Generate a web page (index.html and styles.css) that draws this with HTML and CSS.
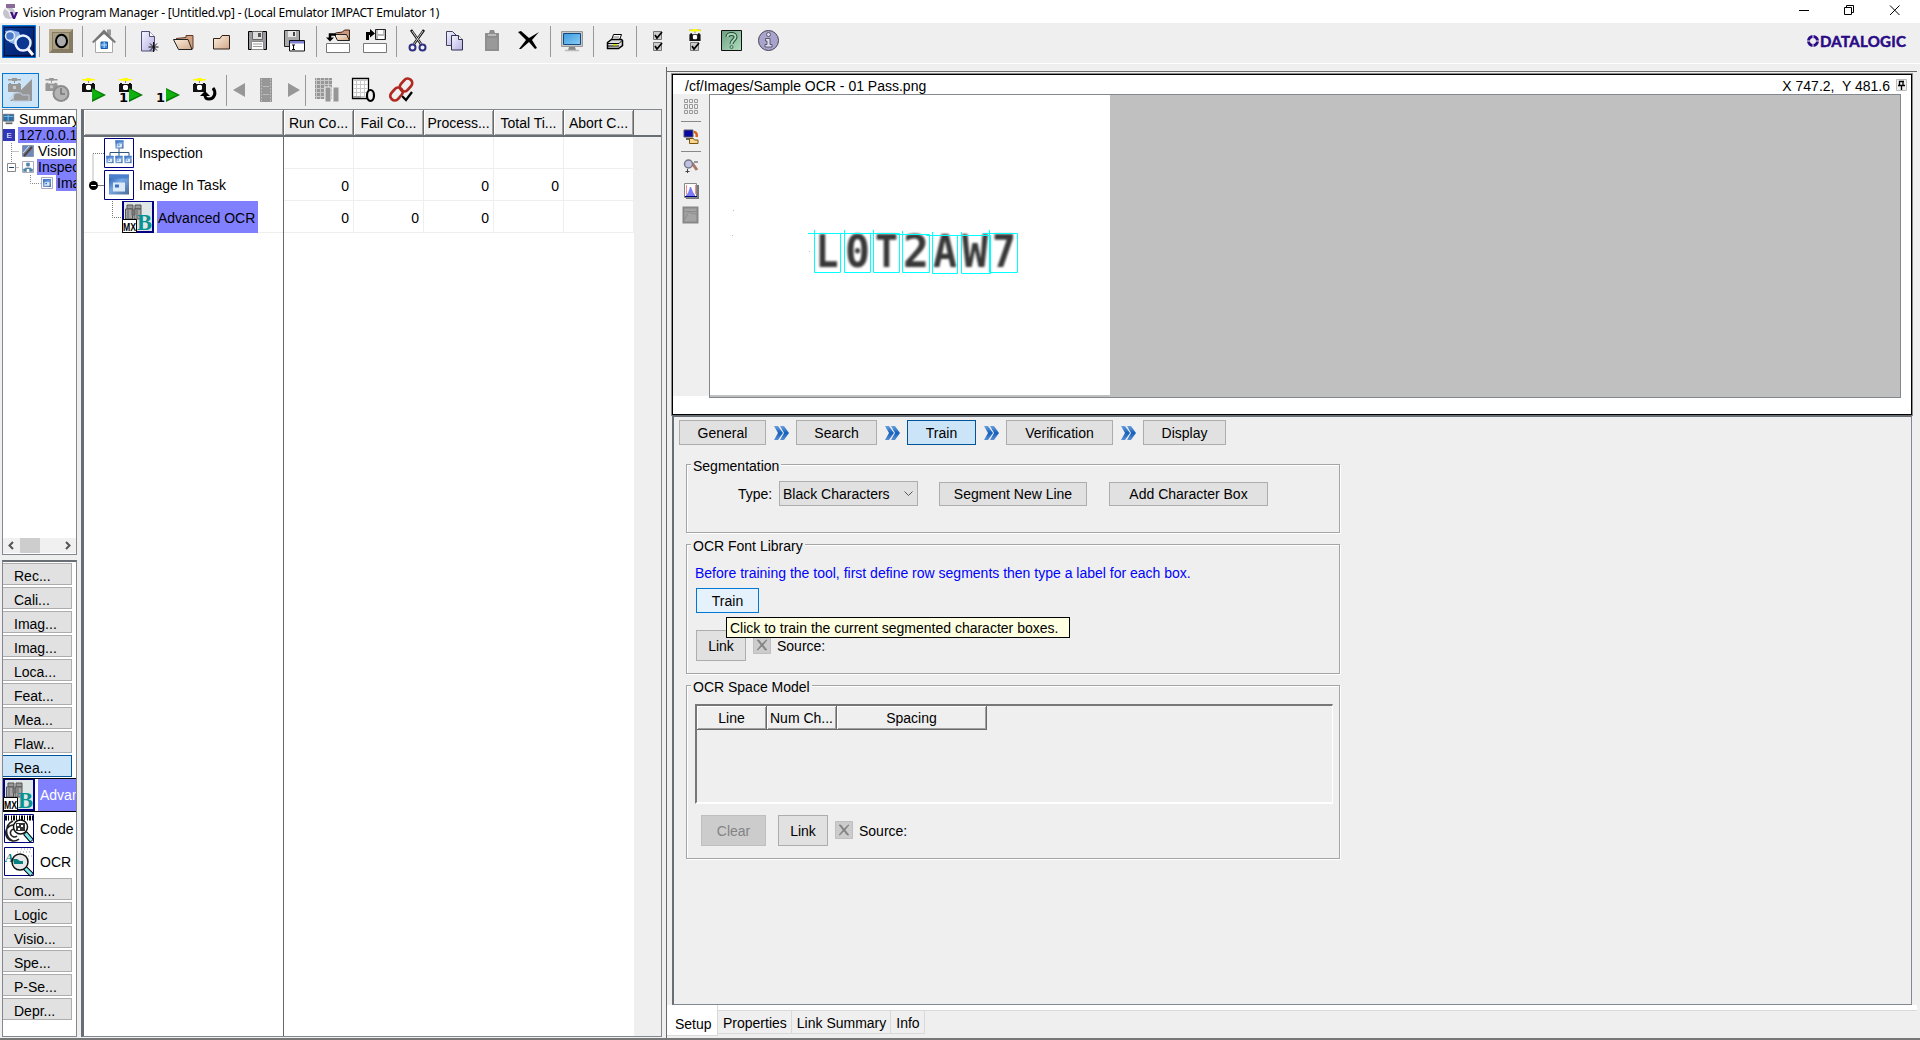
FILE: index.html
```html
<!DOCTYPE html>
<html lang="en">
<head>
<meta charset="utf-8">
<title>Vision Program Manager</title>
<link rel="stylesheet" href="styles.css">
</head>
<body>
<svg class="defs" width="0" height="0">
  <defs>
    <linearGradient id="lilac" x1="0" y1="0" x2="1" y2="1"><stop offset="0" stop-color="#f4f4ff"/><stop offset="1" stop-color="#b4b0e0"/></linearGradient>
    <linearGradient id="tan" x1="0" y1="0" x2="1" y2="1"><stop offset="0" stop-color="#fff0e0"/><stop offset="1" stop-color="#d0a888"/></linearGradient>
    <linearGradient id="navy" x1="0" y1="0" x2="1" y2="1"><stop offset="0" stop-color="#0b3c9c"/><stop offset="1" stop-color="#001a66"/></linearGradient>
    <linearGradient id="sky" x1="0" y1="0" x2="1" y2="1"><stop offset="0" stop-color="#3a9be0"/><stop offset="1" stop-color="#8ccbf5"/></linearGradient>
    <linearGradient id="win" x1="0" y1="0" x2="1" y2="1"><stop offset="0" stop-color="#1c50a8"/><stop offset=".45" stop-color="#78a8e4"/><stop offset="1" stop-color="#4a6a98"/></linearGradient>
    <linearGradient id="greens" x1="0" y1="0" x2="1" y2="1"><stop offset="0" stop-color="#6f9c80"/><stop offset="1" stop-color="#b0e0c0"/></linearGradient>
    <linearGradient id="chevs" x1="0" y1="0" x2="0" y2="1"><stop offset="0" stop-color="#6da0dc"/><stop offset=".5" stop-color="#1460bc"/><stop offset="1" stop-color="#5a90d4"/></linearGradient>
    <pattern id="filmgrid" width="4" height="4" patternUnits="userSpaceOnUse"><path d="M0 .5h4M.5 0v4" stroke="#c8c8c8"/></pattern>
    <symbol id="cam" viewBox="0 0 13 14"><path d="M0 1.5h13" stroke="#000" stroke-width="1"/><path d="M0 1h13v1.6h-13zM4 0h5v3h-5z" fill="#ff0"/><path d="M6 3h1v2h-1z" fill="#888"/><path d="M1 5h2v1h7v-1h2v1h1v8h-13v-8h1z" fill="#111"/><path d="M5 7h3l1 1v3l-1 1h-3l-1-1v-3z" fill="#fff"/></symbol>
    <symbol id="camgray" viewBox="0 0 13 14"><path d="M0 1h13v1.6h-13zM4 0h5v3h-5zM6 3h1v2h-1zM1 5h2v1h7v-1h2v1h1v8h-13v-8h1z" fill="#979797"/><path d="M5 8h3v3h-3z" fill="#c8c8c8"/></symbol>
    <symbol id="play" viewBox="0 0 15 14"><path d="M1 0l14 7-14 7z" fill="#0a7c0a"/><path d="M1 1l11 6-11 5z" fill="#10b010"/></symbol>
    <symbol id="chevron" viewBox="0 0 15 14"><path d="M0 0h4l5 7-5 7h-4l4-7zM6 0h4l5 7-5 7h-4l4-7z" fill="url(#chevs)"/></symbol>
    <symbol id="window" viewBox="0 0 22 22"><path d="M1 1h20v20h-20z" fill="url(#win)"/><path d="M1 1h20v4h-20z" fill="#4a80cc"/><path d="M5 9h12v9h-12z" fill="#dceaf8"/><path d="M7 11h4v3h-4z" fill="#3870c8"/></symbol>
    <symbol id="mxb" viewBox="0 0 32 32"><path d="M0 0h32v32h-32z" fill="#000080"/><path d="M2 1h28v29h-28z" fill="#dfe7e7"/><path d="M5 4h6v4h-6zM13 4h6v4h-6z" fill="#999" stroke="#555"/><path d="M3.500 8h7v10h-7zM12 8h7v10h-7z" fill="#a4a4a4" stroke="#555"/><path d="M10 9h3v5h-3zM6 9v8M15 9v8" stroke="#666" fill="#777"/><text x="15" y="29" font-family="Liberation Serif" font-weight="700" font-size="24" fill="#0a9292" textLength="15" lengthAdjust="spacingAndGlyphs">B</text><path d="M.5 18.500h14v13h-14z" fill="#fff" stroke="#000"/><text x="1" y="29.500" font-family="Liberation Sans" font-weight="700" font-size="10" textLength="13" lengthAdjust="spacingAndGlyphs">MX</text></symbol>
    <symbol id="check" viewBox="0 0 10 9"><path d="M.5 .5h8v8h-8z" fill="#ccc" stroke="#777"/><path d="M2 4l2 3 5-6" fill="none" stroke="#000" stroke-width="1.700"/></symbol>
    <symbol id="cross" viewBox="0 0 18 18"><path d="M.5 .5h17v17h-17z" fill="#ccc" stroke="#bfbfbf"/><path d="M4 4h2l3 4 4-4h1l-4 5 4 5h-2l-3-4-4 4h-1l4-5z" fill="#838383" stroke="#838383" stroke-width=".6"/></symbol>
  </defs>
</svg>

<header class="titlebar">
  <svg class="app-icon" viewBox="0 0 18 18"><circle cx="7" cy="10" r="6" fill="#c4c4cc"/><path d="M4 1h9v4h-9z" fill="#8a6a98"/><path d="M3 5l4 3 2 6" stroke="#eee" fill="none" stroke-width="2"/><path d="M8 9l3 7h2l3-7h-2.500l-1.500 4-1.500-4z" fill="#401080"/></svg>
  <span class="title">Vision Program Manager - [Untitled.vp] - (Local Emulator IMPACT Emulator 1)</span>
  <svg class="win-controls" viewBox="0 0 108 23"><path d="M4 10.500h10" stroke="#000"/><path d="M49.500 7.500h7v7h-7zM51.500 7.500v-2h7v7h-2" fill="none" stroke="#000"/><path d="M95 5.500l9.500 9.500M104.500 5.500l-9.500 9.500" stroke="#000" fill="none"/></svg>
</header>

<nav class="toolbar">
  <svg class="tool" viewBox="0 23 37 36"><path d="M2.500 25.500h33v32h-33z" fill="url(#navy)" stroke="#0078d7"/><path d="M4.500 27.500h29v28h-29z" fill="none" stroke="#000" stroke-dasharray="1 1"/><path d="M5 31l6-1 8 2 3 8-6 5-7-3z" fill="#8fb4e8"/><circle cx="10" cy="36" r="4.500" fill="#4c78c8" stroke="#dceaff" stroke-width="1.500"/><circle cx="23" cy="43" r="7.500" fill="#0c3790" stroke="#e8f2ff" stroke-width="2.400"/><path d="M28 49l5 6" stroke="#fff" stroke-width="3"/></svg>
  <i class="sep"></i>
  <svg class="tool" viewBox="43 23 37 36"><path d="M49 29h24v24h-24z" fill="#857b62"/><path d="M49 29h24l-3 3h-18v18l-3 3z" fill="#b8ad90"/><path d="M53 33h16v16h-16z" fill="#a89e84"/><ellipse cx="61.500" cy="41" rx="5.500" ry="6.300" fill="#aaa" stroke="#000" stroke-width="2"/></svg>
  <i class="sep"></i>
  <svg class="tool" viewBox="86 23 37 36"><path d="M95.500 41v11.500h17v-11.500l-8.500-8z" fill="#fff" stroke="#aaa"/><path d="M107 29.500h4v6h-4z" fill="#999"/><path d="M92 42l12-12.500 12 12.500-1.500 1-10.500-9-10.500 9z" fill="#777"/><path d="M101 42h6.500v6.500h-6.500z" fill="#3a8be0" stroke="#1a58a8"/><path d="M104.200 42v6M101 45h6" stroke="#bde"/></svg>
  <i class="sep"></i>
  <svg class="tool" viewBox="129 23 37 36"><path d="M141.500 31.500h8l5 5v14.500h-13z" fill="url(#lilac)" stroke="#505078"/><path d="M149.500 31.500v5h5" fill="#fff" stroke="#505078"/><path d="M153.500 42v10M148.500 47h10M150 43.500l7 7M157 43.500l-7 7" stroke="#111" fill="none"/></svg>
  <svg class="tool" viewBox="166 23 37 36"><path d="M176 38.500l10-1v-2h7v13l-2 1" fill="#d0a080" stroke="#603828"/><path d="M173.500 39.500h14.500l4 10h-13.500z" fill="url(#tan)" stroke="#222"/></svg>
  <svg class="tool" viewBox="203 23 37 36"><path d="M213.500 38.500h6.500l2-3h7.500v13.500h-16z" fill="url(#tan)" stroke="#302018"/></svg>
  <svg class="tool" viewBox="240 23 37 36"><path d="M248.500 31.500h18v18h-18z" fill="#9a9aa0" stroke="#000"/><path d="M252.500 31.500h10v8h-10z" fill="#ddd" stroke="#666"/><path d="M258 33h3v4h-3z" fill="#555"/><path d="M251.500 41.500h12v8h-12z" fill="#fff" stroke="#888"/><path d="M253 44h9M253 46.500h9" stroke="#999"/></svg>
  <svg class="tool" viewBox="277 23 37 36"><path d="M284.500 30.500h15v16h-15z" fill="#aaa" stroke="#222"/><path d="M288 31h8v6h-8z" fill="#e8e8e8"/><path d="M293 32h2v4h-2z" fill="#444"/><path d="M289.500 40.500h15v10.500h-15z" fill="#fff" stroke="#111"/><path d="M290 41h14v2.500h-14z" fill="#8080d0"/><path d="M292 45h3M292 49.500h3M293.500 45v4.500" stroke="#000"/></svg>
  <i class="sep"></i>
  <svg class="tool" viewBox="320 23 37 36"><path d="M326.500 43.500h23v9h-23z" fill="#fff" stroke="#777"/><path d="M335.500 33l7-1 2-2h5v10h-3" fill="#c89880" stroke="#402010"/><path d="M334.500 34.500h12l3 6h-12z" fill="url(#tan)" stroke="#222"/><path d="M336 34.500h-6v4" fill="none" stroke="#000" stroke-width="2.500"/><path d="M326 37.500h8l-4 4z"/></svg>
  <svg class="tool" viewBox="357 23 37 36"><path d="M363.500 43.500h23v9h-23z" fill="#fff" stroke="#777"/><path d="M375.500 29.500h10v10h-10z" fill="#bbb" stroke="#222"/><path d="M378 30h5v4h-5zM378 36h6v3h-6z" fill="#fff"/><path d="M367.500 40v-6.500h3" fill="none" stroke="#000" stroke-width="3"/><path d="M370 29l5 4.500-5 4z"/></svg>
  <i class="sep"></i>
  <svg class="tool" viewBox="400 23 37 36"><path d="M411 30l10 14M424 30l-10 14" stroke="#111" stroke-width="2.500"/><path d="M412 31l9 13M423 31l-9 13" stroke="#fff" stroke-width=".8"/><circle cx="412.500" cy="47.500" r="3" fill="#eef" stroke="#303080" stroke-width="2"/><circle cx="422.500" cy="47.500" r="3" fill="#eef" stroke="#303080" stroke-width="2"/></svg>
  <svg class="tool" viewBox="437 23 37 36"><path d="M446.500 31.500h6l4 4v10h-10z" fill="url(#lilac)" stroke="#404060"/><path d="M451.500 35.500h7l4 4v10.500h-11z" fill="url(#lilac)" stroke="#303050"/><path d="M458.500 35.500v4h4" fill="#fff" stroke="#303050"/></svg>
  <svg class="tool" viewBox="474 23 37 36"><path d="M485 33h4l1-3h4l1 3h4v18h-14z" fill="#8e8e8e"/><path d="M488 34h8v2h-8z" fill="#bbb"/><path d="M487 38h10v11h-10z" fill="#999"/></svg>
  <svg class="tool" viewBox="511 23 37 36"><path d="M518 32l3-1 8 7 10-6-7 8 5 8-2 1-6-7-8 7-2 0 7-9z"/></svg>
  <i class="sep"></i>
  <svg class="tool" viewBox="554 23 37 36"><path d="M561.500 31.500h21v15h-21z" fill="#c8c8c8" stroke="#999"/><path d="M563.500 33.500h17v11h-17z" fill="url(#sky)" stroke="#124a80"/><path d="M569 47h6l1 3h-8z" fill="#888"/><path d="M565 50.500h14" stroke="#bbb" stroke-width="1.500"/></svg>
  <i class="sep"></i>
  <svg class="tool" viewBox="597 23 37 36"><path d="M611.500 40l2-5.500h8l-2 5.500" fill="#fff" stroke="#000"/><path d="M613 37h6" stroke="#777"/><path d="M607.500 42.500l4-3h10l1 1v5l-4 3h-11z" fill="#ddd" stroke="#000" stroke-width="1.500"/><path d="M608 43.500h11l3-3M608 46h11" stroke="#000" fill="none"/><path d="M613 44h4v1.500h-4z" fill="#dd0"/></svg>
  <i class="sep"></i>
  <svg class="tool" viewBox="640 23 37 36"><use href="#check" x="653" y="31" width="10" height="9"/><use href="#check" x="653" y="42" width="10" height="9"/></svg>
  <svg class="tool" viewBox="677 23 37 36"><use href="#cam" x="689" y="29" width="12" height="12"/><use href="#check" x="690" y="42" width="10" height="9"/></svg>
  <svg class="tool" viewBox="714 23 37 36"><path d="M721.500 30.500h20v20h-20z" fill="url(#greens)" stroke="#111"/><path d="M727.500 37c0-4 8-4 8 0 0 3-4 3-4 7" fill="none" stroke="#243" stroke-width="4"/><path d="M727.500 37c0-4 8-4 8 0 0 3-4 3-4 7" fill="none" stroke="#a8d8b8" stroke-width="2"/><circle cx="731.500" cy="47" r="1.500" fill="#a8d8b8" stroke="#243" stroke-width=".7"/></svg>
  <svg class="tool" viewBox="751 23 37 36"><circle cx="768.500" cy="40.500" r="10" fill="#a9a4cc" stroke="#445" /><circle cx="768.500" cy="34.500" r="2" fill="#dde" stroke="#445" stroke-width=".8"/><path d="M765.500 38.500h4.500v6h2v2.500h-7v-2.500h2v-3.500h-1.500z" fill="#dde" stroke="#445" stroke-width=".8"/></svg>
  <div class="brand"><svg width="12" height="12" viewBox="0 0 12 12"><circle cx="6" cy="6" r="4.500" fill="none" stroke="#2b0a86" stroke-width="3"/><path d="M6 0v3M6 9v3M0 6h3M9 6h3" stroke="#efefef" stroke-width="1"/></svg><span>DATALOGIC</span></div>
</nav>

<main class="workspace">
  <section class="left">
    <nav class="runbar">
      <svg class="tool on" viewBox="2 73 37 35"><path d="M32 79v22h-22z" fill="#979797"/><use href="#camgray" x="8" y="78" width="13" height="14"/><path d="M9 99l8-7M14 93h7l1 2h7v6h-16z" fill="#979797" stroke="#bcd"/></svg>
      <svg class="tool" viewBox="39 73 37 35"><use href="#camgray" x="45" y="78" width="13" height="13"/><circle cx="61" cy="93.500" r="7.500" fill="#b4b4b4" stroke="#8c8c8c" stroke-width="2"/><path d="M61 88v6h4" fill="none" stroke="#777" stroke-width="1.500"/></svg>
      <svg class="tool" viewBox="76 73 37 35"><use href="#cam" x="82" y="78" width="13" height="14"/><use href="#play" x="91" y="88" width="15" height="14"/></svg>
      <svg class="tool" viewBox="113 73 37 35"><use href="#cam" x="119" y="78" width="13" height="14"/><text class="one" x="119" y="102">1</text><use href="#play" x="128" y="88" width="15" height="14"/></svg>
      <svg class="tool" viewBox="150 73 37 35"><text class="one" x="156" y="102">1</text><use href="#play" x="165" y="88" width="15" height="14"/></svg>
      <svg class="tool" viewBox="187 73 37 35"><use href="#cam" x="193" y="78" width="13" height="14"/><path d="M213 88c4 5 1 11-4 11-3 0-4-1-4-4" fill="none" stroke="#000" stroke-width="3"/><path d="M200 96l5-5 5 5z"/></svg>
      <i class="sep"></i>
      <svg class="tool half" viewBox="230 73 18 35"><path d="M245 83v14l-12-7z" fill="#979797"/></svg>
      <svg class="tool" viewBox="248 73 37 35"><path d="M260 78h12v24h-12z" fill="#979797"/><path d="M261.500 79v23M270.500 79v23" stroke="#c0c0c0" stroke-dasharray="1.500 1.500"/><path d="M263 86.500h6M263 94.500h6" stroke="#bbb"/></svg>
      <svg class="tool half" viewBox="285 73 18 35"><path d="M288 83v14l12-7z" fill="#979797"/></svg>
      <i class="sep"></i>
      <svg class="tool" viewBox="309 73 37 35"><path d="M315 78h17v21h-17z" fill="#979797"/><path d="M315 78h17v21h-17z" fill="url(#filmgrid)"/><path d="M325 87h6v15h-6zM333 87h6v15h-6z" fill="#979797" stroke="#efefef"/></svg>
      <svg class="tool" viewBox="346 73 37 35"><path d="M352.500 78.500h16v20h-16z" fill="#fff" stroke="#000" stroke-width="1.300"/><path d="M353 79h15v19h-15z" fill="url(#filmgrid)"/><path d="M353 96h8v2h-8z" fill="#999"/><ellipse cx="370.500" cy="95.500" rx="3.500" ry="5.500" fill="#efefef" stroke="#000" stroke-width="2.200"/></svg>
      <svg class="tool" viewBox="383 73 37 35"><g fill="none" stroke="#b02820" stroke-width="2.800"><rect x="-7" y="-4.500" width="14" height="9" rx="4.500" transform="translate(406 85) rotate(-48)"/><rect x="-7" y="-4.500" width="14" height="9" rx="4.500" transform="translate(396.500 94) rotate(-48)"/></g><path d="M402 96l4 4 6-8" fill="none" stroke="#efefef" stroke-width="4"/><path d="M402 96l4 4 6-8" fill="none" stroke="#000" stroke-width="2.200"/></svg>
    </nav>
    <div class="columns">
      <aside class="side">
        <div class="devices">
          <div class="node d0"><svg viewBox="0 0 14 12"><path d="M.5 .5h12v8h-12z" fill="#2a6ea8" stroke="#666"/><path d="M1 3h11M6 1v7" stroke="#7cc4f0"/><path d="M3 10h8v2h-8z" fill="#666"/></svg><span>Summary</span></div>
          <div class="node d0"><svg viewBox="0 0 12 12"><path d="M0 0h12v12h-12z" fill="#3038b8"/><text x="3.500" y="9" font-size="8" fill="#fff" font-family="Liberation Sans">E</text></svg><span class="sel">127.0.0.1</span></div>
          <div class="node d1"><svg viewBox="0 0 12 12"><path d="M.5 .5h11v11h-11z" fill="#7088b8" stroke="#8898b0"/><path d="M2 11l8-9" stroke="#543" stroke-width="2"/><path d="M1 8l6-7" stroke="#cde"/></svg><span>Vision</span></div>
          <div class="node d1"><svg viewBox="0 0 12 12"><path d="M.5 .5h11v11h-11z" fill="#fff" stroke="#aab"/><path d="M4.500 2h3v3h-3zM1.500 8h3v2.500h-3zM7.500 8h3v2.500h-3zM6 5v2M3 8v-1h6v1" fill="#48a" stroke="#68a" stroke-width=".6"/></svg><span class="sel">Inspection</span></div>
          <div class="node d2"><svg viewBox="0 0 12 12"><path d="M.5 .5h11v11h-11z" fill="#fff" stroke="#aab"/><use href="#window" x="1.500" y="1.500" width="9" height="9"/></svg><span class="sel">Image</span></div>
          <svg class="branches" viewBox="0 0 60 80"><path d="M8.500 32v45M8.500 40.500h8M8.500 56.500h8M27.500 64v8.500h10" transform="translate(0 0)" fill="none" stroke="#888" stroke-dasharray="1 1"/><path d="M8 61h1v20h-1z" fill="#fff"/><path d="M4.500 52.500h8v8h-8z" fill="#fff" stroke="#888"/><path d="M6 56.500h5" stroke="#246"/></svg>
          <div class="hscroll"><svg viewBox="0 0 73 15"><path d="M0 0h73v15h-73z" fill="#f0f0f0"/><path d="M17 0h20v15h-20z" fill="#cdcdcd"/><path d="M10 4l-3.500 3.500 3.500 3.500M63 4l3.500 3.500-3.500 3.500" fill="none" stroke="#555" stroke-width="2"/></svg></div>
        </div>
        <div class="palette">
          <div class="cat">Rec...</div><div class="cat">Cali...</div><div class="cat">Imag...</div><div class="cat">Imag...</div><div class="cat">Loca...</div><div class="cat">Feat...</div><div class="cat">Mea...</div><div class="cat">Flaw...</div><div class="cat active">Rea...</div>
          <div class="item chosen"><svg viewBox="0 0 32 32"><use href="#mxb" width="32" height="32"/></svg><span>Advanced OCR</span></div>
          <div class="item"><svg viewBox="0 0 32 32"><path d="M1.500 1.500h29v28h-29z" fill="#fff" stroke="#000080"/><path d="M2 5h28" stroke="#000" stroke-width="5" stroke-dasharray="2 1 1 2 1 1"/><path d="M11 12a8 8 0 1 0 5 14M10 8a11 11 0 0 0 0 20M12 16a4 4 0 1 0 2 7" fill="none" stroke="#222" stroke-width="1.600"/><circle cx="17.500" cy="14" r="7" fill="#fff" stroke="#111" stroke-width="1.500"/><path d="M13 10h9v8h-9z" fill="#333"/><path d="M14 11h2v2h-2zM18 12h2v2h-2zM15 15h2v2h-2z" fill="#fff"/><path d="M22 20l7 8" stroke="#000" stroke-width="5"/><path d="M22.500 20.500l6 7" stroke="#7de8ec" stroke-width="3"/></svg><span>Code</span></div>
          <div class="item"><svg viewBox="0 0 32 32"><path d="M1.500 1.500h29v28h-29z" fill="#fff" stroke="#000080"/><path d="M14 6h15M18 3h11M22 10h7" stroke="#999" stroke-dasharray="1 2"/><text x="2" y="16" font-family="Liberation Serif" font-style="italic" font-weight="700" font-size="13" fill="#078080">A</text><circle cx="17" cy="16" r="8" fill="#e8e8e8" stroke="#111" stroke-width="1.500"/><path d="M10 13h4l3 2h3v3h-9z" fill="#078080"/><path d="M22 22l7 7" stroke="#000" stroke-width="5"/><path d="M22.500 22.500l6 6" stroke="#7de8ec" stroke-width="3"/></svg><span>OCR</span></div>
          <div class="cat">Com...</div><div class="cat">Logic</div><div class="cat">Visio...</div><div class="cat">Spe...</div><div class="cat">P-Se...</div><div class="cat">Depr...</div>
        </div>
      </aside>
      <div class="program">
        <div class="heads"><b></b><b>Run Co...</b><b>Fail Co...</b><b>Process...</b><b>Total Ti...</b><b>Abort C...</b><i></i></div>
        <div class="body">
          <div class="steps">
            <svg class="wires" viewBox="83 137 80 96"><path d="M103 153.500h-11v32h11M111.500 201v16.500h11" fill="none" stroke="#777" stroke-dasharray="1 1"/><circle cx="92.500" cy="185.500" r="4.500"/><path d="M90 185.500h5" stroke="#fff"/><path d="M97 185.500h6" stroke="#777"/></svg>
            <div class="step"><svg viewBox="0 0 30 31"><path d="M.5 .5h29v29h-29z" fill="#fff" stroke="#000080"/><path d="M15 10v5M6 18v-3.500h19v3.500M15 15v3" fill="none" stroke="#357"/><use href="#window" x="11" y="2" width="9" height="9"/><use href="#window" x="2" y="17" width="8" height="9"/><use href="#window" x="11" y="17" width="8" height="9"/><use href="#window" x="20" y="17" width="8" height="9"/></svg><span>Inspection</span></div>
            <div class="step"><svg viewBox="0 0 30 31"><path d="M.5 .5h29v29h-29z" fill="#fff" stroke="#000080"/><use href="#window" x="4" y="3" width="22" height="23"/></svg><span>Image In Task</span></div>
            <div class="step tool-step"><svg viewBox="0 0 32 32"><use href="#mxb" width="32" height="32"/></svg><span class="sel">Advanced OCR</span></div>
          </div>
          <div class="stats">
            <span></span><span></span><span></span><span></span><span></span>
            <span>0</span><span></span><span>0</span><span>0</span><span></span>
            <span>0</span><span>0</span><span>0</span><span></span><span></span>
          </div>
          <div class="filler"></div>
        </div>
      </div>
    </div>
  </section>

  <section class="right">
    <div class="viewer-frame">
      <div class="viewer">
        <div class="caption"><span>/cf/Images/Sample OCR - 01 Pass.png</span><span class="coords">X 747.2,&nbsp; Y 481.6</span><svg width="11" height="12" viewBox="0 0 11 12"><path d="M.5 .5h10v11h-10z" fill="#eee" stroke="#bbb"/><path d="M3.500 2v4M7 2v4M3 2.500h5M2 6.500h7M5.500 7v4" stroke="#000" stroke-width="1.300"/></svg></div>
        <div class="stage">
          <svg class="imgtools" viewBox="679 100 36 302"><g fill="none" stroke="#999"><path d="M690.500 105.500h3v3h-3zM695.500 105.500h3v3h-3zM700.500 105.500h3v3h-3zM690.500 110.500h3v4h-3zM695.500 110.500h3v4h-3zM700.500 110.500h3v4h-3zM690.500 116.500h3v3h-3zM695.500 116.500h3v3h-3zM700.500 116.500h3v3h-3z"/><path d="M687 127.500h20M687 157.500h20" stroke="#888"/></g><path d="M690 136h9v7h-9z" fill="#0808a0" stroke="#556"/><path d="M692 145h5" stroke="#666" stroke-width="2"/><path d="M700 138c3 0 3 3 2.500 5" stroke="#d86010" stroke-width="2.500" fill="none"/><path d="M695.500 144.500h4l1 1.500h3.500v3.500h-8.500z" fill="#f8d890" stroke="#7a5510"/><path d="M698 169l5 7" stroke="#a76" stroke-width="3"/><circle cx="694.500" cy="170" r="4" fill="#c0c0e0" stroke="#778" stroke-width="1.500"/><path d="M700 168h4M693.500 175v4M691.500 177.500h4" stroke="#444"/><path d="M692 191h13v14h-13z" fill="#777"/><path d="M690.500 189.500h12v14h-12z" fill="#fff" stroke="#888"/><path d="M692 201l2-2 2-6 1 0 2 5 2 3v1h-9z" fill="#7c7cf4"/><path d="M692.500 191v9M701.500 191v9" stroke="#f88"/><path d="M691 202.500h12" stroke="#000080"/><path d="M689.500 213.500h14v15h-14z" fill="#a4a4a4" stroke="#888" stroke-width="2"/><path d="M691 225l4-8 3 3 2-1 3 2M691 217.500h12" fill="none" stroke="#8c8c8c"/></svg>
          <svg class="canvas" viewBox="716 101 1190 302">
            <path d="M716 101h400v300h-400z" fill="#fff"/>
            <g class="print"><text x="821.500" y="273" textLength="23" lengthAdjust="spacingAndGlyphs">L</text><text x="851" y="273" textLength="25" lengthAdjust="spacingAndGlyphs">0</text><text x="881" y="273" textLength="23" lengthAdjust="spacingAndGlyphs">T</text><text x="909" y="273" textLength="26" lengthAdjust="spacingAndGlyphs">2</text><text x="939" y="273" textLength="24" lengthAdjust="spacingAndGlyphs">A</text><text x="968" y="273" textLength="26" lengthAdjust="spacingAndGlyphs">W</text><text x="998" y="273" textLength="24" lengthAdjust="spacingAndGlyphs">7</text></g>
            <g fill="none" stroke="#00ffff"><path d="M820.500 236v42.500h26v-39M814 239.500h68M850.500 236v42.500h26v-39M879.500 236v42.500h26v-39h-28M908.500 237v41.500h27v-38h-33M938.500 238v41.500h25v-38h-31M967.500 238v41.500h29v-38h-33M995.500 236v42.500h28v-39h-34.500"/></g>
            <path d="M739 216h1v1h-1zM738 241h1v1h-1zM815 257h1v1h-1z" fill="#bbb"/>
          </svg>
        </div>
      </div>
    </div>
    <div class="setup">
      <nav class="crumbs">
        <button>General</button><svg><use href="#chevron"/></svg><button>Search</button><svg><use href="#chevron"/></svg><button class="active">Train</button><svg><use href="#chevron"/></svg><button>Verification</button><svg><use href="#chevron"/></svg><button>Display</button>
      </nav>
      <div class="group seg"><h2>Segmentation</h2>
        <div class="seg-row"><span class="lbl">Type:</span><div class="combo">Black Characters<svg width="9" height="6" viewBox="0 0 9 6"><path d="M.5 .5l4 4 4-4" fill="none" stroke="#555"/></svg></div><button class="b-line">Segment New Line</button><button class="b-box">Add Character Box</button></div>
      </div>
      <div class="group lib"><h2>OCR Font Library</h2>
        <p>Before training the tool, first define row segments then type a label for each box.</p>
        <button class="hover">Train</button>
        <div class="source"><button class="link">Link</button><svg class="x"><use href="#cross"/></svg><span>Source:</span></div>
        <div class="tooltip">Click to train the current segmented character boxes.</div>
      </div>
      <div class="group space"><h2>OCR Space Model</h2>
        <div class="list"><div class="list-head"><b>Line</b><b>Num Ch...</b><b>Spacing</b></div></div>
        <div class="source"><button class="clear" disabled>Clear</button><button class="link">Link</button><svg class="x"><use href="#cross"/></svg><span>Source:</span></div>
      </div>
    </div>
    <div class="tabs"><span class="current">Setup</span><span>Properties</span><span>Link Summary</span><span>Info</span></div>
  </section>
</main>
</body>
</html>
```

FILE: styles.css
```css
* { box-sizing: border-box; }
body { margin: 0; width: 1920px; height: 1040px; overflow: hidden; display: flex; flex-direction: column; background: #efefef; color: #000; font: 14px/16px "Liberation Sans", Arial, sans-serif; }
svg { display: block; flex: none; }
.defs { position: absolute; }
button { font: inherit; color: #000; padding: 0; background: #e1e1e1; border: 1px solid #adadad; border-radius: 0; flex: none; }
h2, p { margin: 0; font: inherit; }

.titlebar { height: 23px; flex: none; background: #fff; display: flex; align-items: center; padding-left: 2px; }
.app-icon { width: 18px; height: 18px; }
.title { font: 12px/16px "Noto Sans", sans-serif; margin-left: 3px; padding-top: 2px; letter-spacing: -.22px; white-space: nowrap; }
.win-controls { width: 108px; height: 23px; margin-left: auto; margin-right: 17px; }

.toolbar { height: 41px; flex: none; display: flex; align-items: flex-start; border-bottom: 1px solid #fff; }
.tool { width: 37px; height: 36px; }
.sep { width: 6px; height: 31px; flex: none; margin-top: 3px; background: linear-gradient(#999, #999) 2px 0 / 1px 100% no-repeat; }
.brand { margin-left: auto; margin-right: 9px; height: 36px; display: flex; align-items: center; color: #2b0a86; font: 700 15px/16px Lato, sans-serif; }
.brand span { margin-left: 1px; width: 91px; -webkit-text-stroke: .5px #2b0a86; letter-spacing: .3px; }

.workspace { flex: 1; min-height: 0; display: flex; border-bottom: 2px solid #777; }
.left { width: 663px; flex: none; display: flex; flex-direction: column; padding-left: 2px; }
.runbar { height: 45px; flex: none; display: flex; padding-top: 9px; }
.runbar .tool { height: 35px; }
.runbar .half { width: 18px; }
.runbar .on { background: #cce4f7; outline: 1px solid #0078d7; outline-offset: -1px; }
.runbar .sep { margin-top: 2px; }
.one { font: 700 13px "DejaVu Sans"; }
.columns { flex: 1; min-height: 0; display: flex; }

.side { width: 75px; flex: none; margin-right: 4px; display: flex; flex-direction: column; gap: 5px; padding-bottom: 1px; }
.devices { height: 446px; flex: none; border: 1px solid #828790; background: #fff; position: relative; display: flex; flex-direction: column; overflow: hidden; padding-top: 1px; }
.node { height: 16px; flex: none; display: flex; align-items: center; white-space: nowrap; }
.node svg { width: 12px; height: 12px; margin-right: 3px; }
.node span { padding-left: 1px; }
.d1 { padding-left: 19px; }
.d2 { padding-left: 38px; }
.sel { background: #8080ff; }
.branches { position: absolute; left: 0; top: 1px; width: 60px; height: 80px; }
.hscroll { margin-top: auto; height: 16px; }
.palette { flex: 1; border: 1px solid #828790; border-top: 2px solid #696d74; background: #fff; padding-top: 1px; overflow: hidden; }
.cat { width: 69px; height: 22px; margin-bottom: 2px; padding: 4px 0 0 11px; line-height: 16px; background: #e1e1e1; border: 1px solid #adadad; border-left: 0; }
.cat.active { background: #cce4f7; border-color: #005499; margin-bottom: 1px; }
.item { height: 33px; display: flex; align-items: center; gap: 5px; white-space: nowrap; overflow: hidden; }
.item svg { width: 32px; height: 32px; }
.item + .cat { margin-top: 0; }
.item.chosen { height: 34px; border-top: 1px solid #000; border-bottom: 1px solid #000; background: linear-gradient(#8080ff, #8080ff) 35px 0 no-repeat; color: #fff; }

.program { width: 581px; display: flex; flex-direction: column; border: 1px solid #828790; border-left: 3px solid #696d74; background: #fff; margin-bottom: 1px; }
.heads { height: 27px; flex: none; display: grid; grid-template-columns: 200px repeat(5, 70px) 1fr; background: #efefef; border-bottom: 2px solid #696d74; }
.heads b { font-weight: 400; text-align: center; padding-top: 5px; white-space: nowrap; border-right: 1px solid #696969; box-shadow: inset 1px 1px #fff, inset -1px -1px #a0a0a0; }
.body { flex: 1; display: grid; grid-template-columns: 200px 350px 1fr; }
.steps { position: relative; border-right: 1px solid #696969; }
.wires { position: absolute; left: 0; top: 0; width: 80px; height: 96px; }
.step { height: 32px; display: flex; align-items: center; padding-left: 20px; position: relative; }
.step svg { width: 30px; height: 31px; margin-right: 5px; }
.tool-step { padding-left: 38px; border-bottom: 1px solid #efefef; }
.tool-step svg { width: 32px; height: 32px; margin-right: 3px; }
.tool-step .sel { height: 32px; line-height: 34px; padding: 0 3px 0 1px; }
.stats { display: grid; grid-template-columns: repeat(5, 70px); grid-auto-rows: 32px; align-content: start; }
.stats span { border: solid #efefef; border-width: 0 1px 1px 0; text-align: right; padding: 9px 4px 0 0; }
.filler { background: #efefef; }

.right { flex: 1; min-width: 0; margin: 3px 3px 0 3px; border-left: 1px solid #696969; display: flex; flex-direction: column; }
.viewer-frame { height: 344px; flex: none; margin-top: 4px; border-top: 1px solid #696969; padding: 2px 5px 0 5px; }
.viewer-frame::before { content: none; }
.viewer { height: 100%; border: 1px solid #000; outline: 1px solid #8c8c8c; background: #fff; display: flex; flex-direction: column; }
.caption { height: 19px; flex: none; display: flex; align-items: center; padding: 3px 4px 0 12px; }
.coords { margin-left: auto; margin-right: 6px; }
.caption svg { margin-top: -2px; }
.stage { flex: 1; display: flex; min-height: 0; }
.imgtools { width: 36px; height: 302px; background: #efefef; }
.canvas { width: 1192px; height: 304px; background: #c0c0c0; border: 1px solid #828790; }
.print { font: 700 44px "DejaVu Sans Mono"; fill: #383838; filter: blur(1px); }

.setup { height: 590px; flex: none; margin: 0 5px; border: 1px solid #828790; border-width: 2px 1px 1px 2px; border-color: #696d74 #828790 #828790 #696d74; padding: 3px 0 0 5px; }
.crumbs { height: 25px; display: flex; align-items: center; }
.crumbs button { height: 25px; width: 87px; }
.crumbs button:nth-of-type(2) { width: 81px; }
.crumbs button:nth-of-type(3) { width: 69px; }
.crumbs button:nth-of-type(4) { width: 107px; }
.crumbs button:nth-of-type(5) { width: 83px; }
.crumbs svg { width: 15px; height: 14px; margin: 0 7.500px; }
.crumbs .active { background: #cce4f7; border-color: #005499; }

.group { width: 654px; margin-left: 7px; border: 1px solid #a5a5a5; box-shadow: 1px 1px #fff, inset 1px 1px #fff; position: relative; }
.group h2 { width: max-content; background: #efefef; margin: -7px 0 0 4px; padding: 0 2px; height: 16px; position: relative; }
.seg { height: 69px; margin-top: 19px; }
.seg-row { display: flex; margin-top: 7px; align-items: center; }
.lbl { width: 92px; padding-left: 51px; }
.combo { width: 139px; height: 25px; border: 1px solid #adadad; background: #e1e1e1; display: flex; align-items: center; justify-content: space-between; padding: 0 4px 0 3px; }
.b-line { width: 148px; height: 24px; margin-left: 21px; }
.b-box { width: 159px; height: 24px; margin-left: 22px; }
.lib { height: 130px; margin-top: 11px; }
.lib p { color: #00f; margin: 11px 0 7px 8px; white-space: nowrap; }
.lib .hover { display: block; width: 63px; height: 25px; margin-left: 9px; background: #e5f1fb; border-color: #0078d7; }
.source { display: flex; align-items: center; }
.lib .source { margin: 17px 0 0 9px; }
.link { width: 50px; height: 31px; }
.x { width: 18px; height: 18px; margin: 0 6px 2px 7px; }
.tooltip { position: absolute; left: 39px; top: 72px; width: 344px; height: 21px; background: #ffffe1; border: 1px solid #000; padding: 2px 3px; white-space: nowrap; }
.space { height: 174px; margin-top: 11px; }
.list { width: 638px; height: 100px; margin: 9px 0 0 8px; border: solid; border-width: 2px 1px 2px 2px; border-color: #777 #fff #fff #777; }
.list-head { display: grid; grid-template-columns: 70px 70px 150px; height: 24px; }
.list-head b { font-weight: 400; text-align: center; padding-top: 4px; border: solid #696969; border-width: 0 1px 1px 0; box-shadow: inset 1px 1px #fff, inset -1px -1px #a0a0a0; white-space: nowrap; }
.space .source { margin: 11px 0 0 14px; }
.clear { width: 65px; height: 31px; margin-right: 12px; background: #ccc; border-color: #bfbfbf; color: #838383; }

.tabs { height: 31px; flex: none; display: flex; align-items: flex-start; background: linear-gradient(#fff 5px, #d9d9d9 5px, #d9d9d9 6px, transparent 6px); }
.tabs span { height: 24px; margin-top: 5px; padding: 4px 4px 0 5px; border: 1px solid #d9d9d9; border-left: 0; white-space: nowrap; }
.tabs .current { height: 31px; margin-top: 0; width: 51px; padding: 11px 0 0 8px; background: #fff; border-top: 0; }
```
